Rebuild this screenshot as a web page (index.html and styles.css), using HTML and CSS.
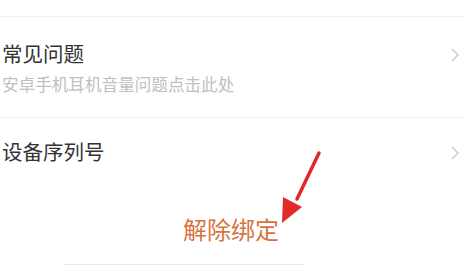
FILE: index.html
```html
<!DOCTYPE html>
<html lang="zh">
  <head>
    <meta charset="utf-8" />
    <title>设备设置</title>
    <link rel="stylesheet" href="styles.css">
  </head>
  <body>
    <div class="page">
      <div class="top-space"></div>

      <div class="item">
        <div class="item-head">
          <span class="item-title">常见问题</span>
          <svg class="chevron" width="10" height="16" viewBox="0 0 10 16">
            <path d="M2 2 L8 8 L2 14" fill="none" stroke="#c8c8c8" stroke-width="1.4" />
          </svg>
        </div>
        <div class="item-sub">安卓手机耳机音量问题点击此处</div>
      </div>

      <div class="item item-single">
        <div class="item-head">
          <span class="item-title">设备序列号</span>
          <svg class="chevron" width="10" height="16" viewBox="0 0 10 16">
            <path d="M2 2 L8 8 L2 14" fill="none" stroke="#c8c8c8" stroke-width="1.4" />
          </svg>
        </div>
      </div>

      <div class="unbind">解除绑定</div>
      <div class="bottom-bar"></div>

      <!-- annotation arrow drawn over the page -->
      <svg class="arrow" width="60" height="90" viewBox="0 0 60 90">
        <line x1="49" y1="8" x2="27" y2="54" stroke="#e0282a" stroke-width="3.5" stroke-linecap="round" />
        <polygon points="12,78 13,52 32,62" fill="#e32a2a" />
      </svg>
    </div>
  </body>
</html>
```

FILE: styles.css
```css
body, html {
  margin: 0;
  padding: 0;
  background: #fff;
}
.page {
  position: relative;
  width: 465px;
  height: 265px;
  overflow: hidden;
  font-family: "Noto Sans CJK SC", "Noto Sans", sans-serif;
}
.top-space {
  height: 16px;
  border-bottom: 1px solid #f0f0f0;
}
.item {
  padding: 26px 5px 24px 2px;
  border-bottom: 1px solid #f0f0f0;
}
.item-single {
  border-bottom: none;
  padding-top: 23px;
  padding-bottom: 0;
}
.item-head {
  display: flex;
  justify-content: space-between;
  align-items: center;
  height: 20px;
}
.item-title {
  font-size: 20.5px;
  line-height: 20px;
  color: #333;
}
.chevron {
  display: block;
  margin-top: 3px;
}
.item-sub {
  margin-top: 13px;
  font-size: 16.6px;
  line-height: 17px;
  color: #c0c0c0;
}
.unbind {
  margin-top: 55px;
  padding-right: 3px;
  text-align: center;
  font-size: 24px;
  line-height: 26px;
  color: #d8733f;
}
.bottom-bar {
  margin: 22px 0 0 63px;
  width: 242px;
  border-top: 1px solid #e8e8e8;
}
.arrow {
  position: absolute;
  left: 270px;
  top: 145px;
}
```
